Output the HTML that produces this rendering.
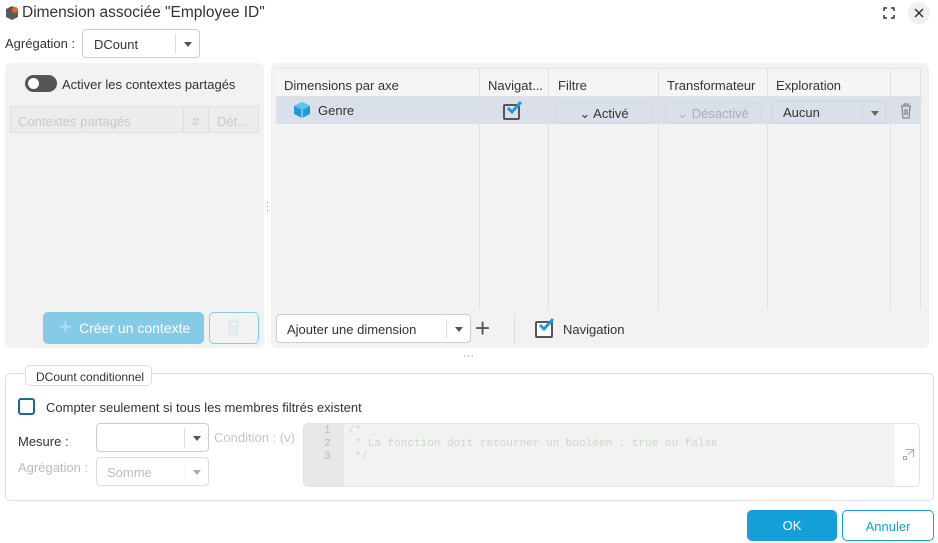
<!DOCTYPE html>
<html><head><meta charset="utf-8"><style>
*{box-sizing:border-box;margin:0;padding:0}
body{width:938px;height:543px;background:#fff;font-family:"Liberation Sans",sans-serif;font-size:13px;color:#333;position:relative;overflow:hidden}
.a{position:absolute}
.sel{position:absolute;border:1px solid #ccc;border-radius:4px;background:#fff}
.sel .c{position:absolute;right:0;top:4px;bottom:4px;width:24px;border-left:1px solid #ddd}
.sel .c:after{content:"";position:absolute;left:8px;top:50%;margin-top:-2px;border:4px solid transparent;border-top:5px solid #555;border-bottom:0}
.vl{position:absolute;top:0;bottom:0;width:1px;background:#e0e0e0}
.mono{font-family:"Liberation Mono",monospace;font-size:11px}
</style></head><body>
<svg class="a" style="left:4px;top:5px" width="16" height="16" viewBox="0 0 16 16"><path d="M8 1 L14 4 V12 L8 15 L2 12 V4Z" fill="#5a5a5a"/><circle cx="11" cy="5" r="3" fill="#e8632b"/></svg>
<div class="a" style="left:22px;top:4px;font-size:15.5px;color:#333">Dimension associée "Employee ID"</div>
<svg class="a" style="left:882px;top:6px" width="14" height="14" viewBox="0 0 14 14" fill="none" stroke="#333" stroke-width="1.5"><path d="M2 5V2H5M9 2H12V5M12 9V12H9M5 12H2V9"/></svg>
<div class="a" style="left:908px;top:2px;width:22px;height:22px;border-radius:11px;background:#f0f0f0"></div>
<svg class="a" style="left:913px;top:7px" width="12" height="12" viewBox="0 0 12 12" stroke="#333" stroke-width="1.5"><path d="M2 2L10 10M10 2L2 10"/></svg>

<div class="a" style="left:5px;top:36px">Agrégation :</div>
<div class="sel" style="left:82px;top:29px;width:118px;height:29px"><span class="a" style="left:11px;top:7px">DCount</span><div class="c"></div></div>

<div class="a" style="left:5px;top:63px;width:259px;height:285px;background:#f2f2f2;border-radius:6px"></div>
<div class="a" style="left:25px;top:75px;width:32px;height:17px;border-radius:9px;background:#555"><div class="a" style="left:3px;top:3px;width:11px;height:11px;border-radius:6px;background:#fff"></div></div>
<div class="a" style="left:62px;top:77px">Activer les contextes partagés</div>
<div class="a" style="left:10px;top:106px;width:249px;height:27px;background:#ececec;border:1px solid #e0e0e0;color:#c8c8c8">
<span class="a" style="left:7px;top:7px">Contextes partagés</span>
<div class="vl" style="left:172px;background:#ddd"></div><span class="a" style="left:181px;top:7px">#</span>
<div class="vl" style="left:197px;background:#ddd"></div><span class="a" style="left:206px;top:7px">Dét...</span></div>
<div class="a" style="left:43px;top:312px;width:161px;height:32px;background:#85cbe8;border-radius:5px;color:#fff;font-size:14px;padding:8px 0 0 18px"><b style="color:#b6e0f2;font-size:22px;position:absolute;left:16px;top:2px;font-weight:normal">+</b><span style="margin-left:18px">Créer un contexte</span></div>
<div class="a" style="left:209px;top:312px;width:50px;height:32px;border:1px solid #85cbe8;border-radius:5px"></div>
<svg class="a" style="left:227px;top:319px" width="13" height="17" viewBox="0 0 13 17" fill="none" stroke="#cde8f4" stroke-width="1.3"><path d="M1 3H12M4 3V1H9V3M2 3L3 16H10L11 3M5 6V13M8 6V13"/></svg>
<div class="a" style="left:266px;top:200px;color:#777;font-size:9px;line-height:4px">·<br>·<br>·</div>

<div class="a" style="left:271px;top:63px;width:658px;height:285px;background:#f2f2f2;border-radius:6px"></div>
<div class="a" style="left:276px;top:68px;width:647px;height:241px;background:#f3f3f3;border-top:1px solid #e4e4e4">
<div class="a" style="left:0;top:0;width:647px;height:28px;background:#f5f5f5;border-bottom:1px solid #e0e0e0"></div>
<div class="a" style="left:0;top:28px;width:645px;height:27px;background:#d9e0ea"></div>
<div class="vl" style="left:203px"></div><div class="vl" style="left:272px"></div><div class="vl" style="left:382px"></div><div class="vl" style="left:491px"></div><div class="vl" style="left:614px"></div><div class="vl" style="left:644px"></div>
<span class="a" style="left:8px;top:9px">Dimensions par axe</span>
<span class="a" style="left:212px;top:9px">Navigat...</span>
<span class="a" style="left:282px;top:9px">Filtre</span>
<span class="a" style="left:391px;top:9px">Transformateur</span>
<span class="a" style="left:500px;top:9px">Exploration</span>
<svg class="a" style="left:17px;top:32px" width="18" height="18" viewBox="0 0 18 18"><path d="M9 1L17 5V13L9 17L1 13V5Z" fill="#1e9ad6"/><path d="M1 5L9 9L17 5L9 1Z" fill="#5cc1ee"/><path d="M9 9V17" stroke="#fff" stroke-width=".8"/></svg>
<span class="a" style="left:42px;top:34px">Genre</span>
<div class="a" style="left:227px;top:35px;width:17px;height:16px;border:2px solid #555;border-radius:2px"></div>
<svg class="a" style="left:229px;top:31px" width="18" height="16" viewBox="0 0 18 16" fill="none" stroke="#1e9ad6" stroke-width="3"><path d="M3 8L7 12L16 2"/></svg>
<div class="a" style="left:280px;top:33px;width:96px;height:21px;border:1px solid #d3d9e2;border-radius:4px;background:#d9e0ea;text-align:center;padding-top:3px">⌄ Activé</div>
<div class="a" style="left:389px;top:33px;width:96px;height:21px;border:1px solid #d3d9e2;border-radius:4px;background:#d9e0ea;text-align:center;padding-top:3px;color:#aab">⌄ Désactivé</div>
<div class="a" style="left:496px;top:32px;width:114px;height:23px;border:1px solid #d0d6de;border-radius:4px;background:#d9e0ea"><span class="a" style="left:10px;top:3px">Aucun</span><div class="a" style="left:89px;top:3px;bottom:3px;width:1px;background:#d0d6de"></div><div class="a" style="left:98px;top:9px;border:4px solid transparent;border-top:5px solid #666;border-bottom:0"></div></div>
<svg class="a" style="left:624px;top:34px" width="12" height="16" viewBox="0 0 12 16" fill="none" stroke="#888" stroke-width="1.3"><path d="M1 3H11M4 3V1H8V3M2 3L3 15H9L10 3M5 6V12M7 6V12"/></svg>
</div>
<div class="sel" style="left:276px;top:314px;width:195px;height:29px"><span class="a" style="left:10px;top:7px">Ajouter une dimension</span><div class="c"></div></div>
<div class="a" style="left:475px;top:313px;font-size:26px;color:#555;line-height:30px">+</div>
<div class="a" style="left:514px;top:314px;width:1px;height:30px;background:#ddd"></div>
<div class="a" style="left:535px;top:321px;width:18px;height:17px;border:2px solid #555;border-radius:2px;background:#fff"></div>
<svg class="a" style="left:537px;top:317px" width="18" height="16" viewBox="0 0 18 16" fill="none" stroke="#1e9ad6" stroke-width="3"><path d="M3 8L7 12L16 2"/></svg>
<div class="a" style="left:563px;top:322px">Navigation</div>
<div class="a" style="left:463px;top:350px;color:#888;font-size:11px">···</div>

<div class="a" style="left:5px;top:373px;width:929px;height:128px;border:1px solid #ddd;border-radius:5px"></div>
<div class="a" style="left:25px;top:365px;width:127px;height:21px;border:1px solid #ddd;border-radius:5px;background:#fff;font-size:12px;padding:4px 0 0 10px">DCount conditionnel</div>
<div class="a" style="left:18px;top:398px;width:17px;height:17px;border:2px solid #1b6a93;border-radius:3px"></div>
<div class="a" style="left:46px;top:400px">Compter seulement si tous les membres filtrés existent</div>
<div class="a" style="left:18px;top:434px">Mesure :</div>
<div class="sel" style="left:96px;top:423px;width:113px;height:29px"><div class="c"></div></div>
<div class="a" style="left:18px;top:460px;color:#bbb">Agrégation :</div>
<div class="sel" style="left:96px;top:457px;width:113px;height:29px;border-color:#ddd"><span class="a" style="left:10px;top:7px;color:#bbb">Somme</span><div class="c" style="border-color:#eee;opacity:.5"></div></div>
<div class="a" style="left:214px;top:430px;color:#c4c4c4">Condition : (v)</div>
<div class="a" style="left:303px;top:423px;width:617px;height:64px;border:1px solid #e2e2e2;border-radius:5px;background:#fff"></div>
<div class="a" style="left:304px;top:424px;width:591px;height:62px;background:#f2f2f2;border-radius:4px 0 0 4px"></div>
<div class="a" style="left:304px;top:424px;width:40px;height:62px;background:#e8e8e8"></div>
<div class="a mono" style="left:324px;top:425px;color:#bbb;line-height:13px">1<br>2<br>3</div>
<div class="a mono" style="left:348px;top:425px;color:#cbd8c8;line-height:13px;white-space:pre">/*
 * La fonction doit retourner un booléen : true ou false
 */</div>
<svg class="a" style="left:903px;top:449px" width="11" height="11" viewBox="0 0 11 11" fill="none" stroke="#aaa"><path d="M3 .5H10.5V8M.5 7.5H3.5V10.5H.5ZM5 6L10 1"/></svg>

<div class="a" style="left:747px;top:510px;width:90px;height:31px;background:#159fd8;border-radius:5px;color:#fff;text-align:center;padding-top:8px">OK</div>
<div class="a" style="left:842px;top:510px;width:92px;height:31px;border:1px solid #159fd8;border-radius:5px;color:#159fd8;text-align:center;padding-top:8px">Annuler</div>
</body></html>
